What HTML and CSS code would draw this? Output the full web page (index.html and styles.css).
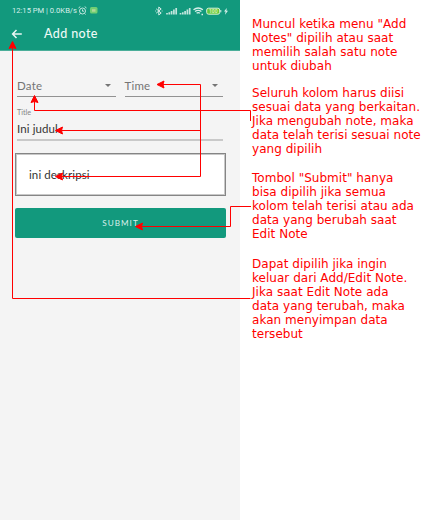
FILE: index.html
```html
<!DOCTYPE html>
<html lang="id">
<head>
<meta charset="utf-8">
<title>Add note</title>
<link rel="stylesheet" href="styles.css">
</head>
<body>
<main class="board">
  <section class="phone">
    <header class="appbar">
      <div class="status">
        <span class="clock">12:15 PM | 0.0KB/s</span>
        <svg class="alarm" width="9" height="9" viewBox="0 0 9 9"><circle cx="4.5" cy="5" r="3"/><path d="M.5 2 2.3.6M8.5 2 6.7.6M4.5 3.4V5.2H6M2.3 7.5 1.5 8.5M6.7 7.5 7.5 8.5"/></svg>
        <svg class="app" width="8" height="7" viewBox="0 0 8 7"><rect width="7.5" height="6.5" rx="1.5" fill="#72ce73"/><path d="M2 2.2h3.5v2.5H2z" fill="#b0d999"/></svg>
        <svg class="signals" width="74" height="10" viewBox="0 0 74 10">
          <path class="line" d="M1.2 2.8 6.2 7 3.8 9V1L6.2 3 1.2 7.2M.3 5h.8M6.7 5h.8"/>
          <path class="bars" d="M12 8.5V7M14.3 8.5V6.2M16.6 8.5V5M18.9 8.5V3.5M21.2 8.5V2"/>
          <path class="bars" d="M25.5 8.5V7M27.8 8.5V6.2M30.1 8.5V5M32.4 8.5V3.5M34.7 8.5V2"/>
          <path class="line wifi" d="M38.5 3.8Q43.2.2 47.9 3.8M40 5.6Q43.2 3.1 46.4 5.6M41.6 7.3Q43.2 6 44.8 7.3M46.5 8.5h1.5"/>
          <rect x="51.7" y="2.2" width="13" height="6" rx="1.8" fill="#62c83b" stroke="#d8f2d8"/>
          <path class="line" d="M65.8 4v2.3"/>
          <text x="58.2" y="7" class="level">100</text>
          <path d="M71.8 2 69 5.6h1.6L70 8.8l3-4h-1.6z" fill="#d7efea"/>
        </svg>
      </div>
      <div class="titlebar">
        <svg width="12" height="12" viewBox="0 0 12 12"><path d="M10.800 6H1.800M5.500 2 1.600 6 5.500 10"/></svg>
        <h1>Add note</h1>
      </div>
    </header>
    <form class="form">
      <div class="pickers">
        <div class="picker date"><span>Date</span><i class="caret"></i></div>
        <div class="picker"><span>Time</span><i class="caret"></i></div>
      </div>
      <div class="field">
        <label>Title</label>
        <div class="value">Ini judul</div>
      </div>
      <div class="description">ini deskripsi</div>
      <button class="submit" type="button">SUBMIT</button>
    </form>
  </section>
  <aside class="notes">
    <p>Muncul ketika menu "Add<br>Notes" dipilih atau saat<br>memilih salah satu note<br>untuk diubah</p>
    <p>Seluruh kolom harus diisi<br>sesuai data yang berkaitan.<br>Jika mengubah note, maka<br>data telah terisi sesuai note<br>yang dipilih</p>
    <p class="wide">Tombol "Submit" hanya<br>bisa dipilih jika semua<br>kolom telah terisi atau ada<br>data yang berubah saat<br>Edit Note</p>
    <p>Dapat dipilih jika ingin<br>keluar dari Add/Edit Note.<br>Jika saat Edit Note ada<br>data yang terubah, maka<br>akan menyimpan data<br>tersebut</p>
  </aside>
  <svg class="connectors" width="431" height="521" viewBox="0 0 431 521">
    <path class="wire" d="M12.5 47V298.5H250.5M34.5 101V110.5H250.5V121M163 84.5H200.5V176.5H61M200.5 130.5H61M141 226.5H230.5V206.5H251"/>
    <path class="heads" d="M12.5 41.500l3.500 7-3.500-1-3.500 1zM34.500 95.500l3.500 7-3.500-1-3.500 1zM157 84.500l7-3.500-1 3.500 1 3.500zM55.500 130.500l7-3.500-1 3.500 1 3.500zM55.500 176.500l7-3.500-1 3.500 1 3.500zM135.500 226.500l7-3.500-1 3.500 1 3.500z"/>
  </svg>
</main>
</body>
</html>
```
FILE: styles.css
```css
* { box-sizing: border-box; }
body { margin: 0; background: #fff; font-family: Lato, sans-serif; }
.board { position: relative; display: flex; width: 431px; height: 521px; overflow: hidden; }
.phone { width: 240px; height: 520px; background: #f4f4f4; }

.appbar { height: 51px; background: #12997d; color: #fff; border-bottom: 1px solid #4bae99; }
.status { display: flex; align-items: center; height: 21px; padding-left: 12px; }
.clock { width: 66px; font: 7.6px/10px Roboto, sans-serif; white-space: nowrap; color: #d7efea; }
.alarm { fill: none; stroke: #d7efea; stroke-width: .9; }
.app { margin-left: 3px; }
.signals { margin-left: 57px; }
.line { fill: none; stroke: #d7efea; stroke-width: 1; }
.wifi { stroke-width: 1.3; }
.bars { stroke: #c4e6de; stroke-width: 1.7; }
.level { font: 700 5px Roboto, sans-serif; text-anchor: middle; fill: #d5efb0; }
.titlebar { display: flex; align-items: center; gap: 21px; height: 26px; padding-left: 11px; }
.titlebar svg { fill: none; stroke: #e8f6f3; stroke-width: 1.5; }
h1 { margin: 0; font-size: 12.5px; line-height: 16px; font-weight: 500; letter-spacing: .4px; color: #eef9f6; }

.form { padding: 25px 15px 0; }
.pickers { display: flex; gap: 9px; padding: 0 2px; }
.picker { display: flex; justify-content: space-between; align-items: center; width: 99px; height: 21px; padding-bottom: 1px; border-bottom: 1px solid #929292; font-size: 11.5px; letter-spacing: .2px; color: #757575; }
.caret { margin-right: 5px; border: 3px solid transparent; border-top-color: #757575; border-bottom: 0; }
.field { height: 44px; margin: 0 2px; padding-top: 11px; border-bottom: 2px solid #c9c9c9; }
label { display: block; font-size: 7.2px; line-height: 9px; color: #858585; }
.value { margin-top: 5px; font-size: 11.5px; line-height: 14px; letter-spacing: .1px; color: #333; }
.description { height: 43px; margin: 12px -1px 0 0; padding: 13px 13px; border: 1px solid #858585; outline: 1px solid #c8c8c8; outline-offset: -2px; background: #fff; font-size: 11.5px; line-height: 15px; letter-spacing: .1px; color: #333; }
.submit { display: block; width: 211px; height: 30px; margin-top: 12px; padding: 0; border: 0; border-radius: 2px; background: #12997d; color: #d9efea; font: 8.2px/30px Lato, sans-serif; letter-spacing: 1px; }

.notes { padding: 17px 0 0 12px; font: 12px/14px "DejaVu Sans", sans-serif; letter-spacing: .03px; color: #f00; white-space: nowrap; }
.notes p { margin: 0 0 13px; }
.notes p + p { margin-bottom: 15px; }
.notes .wide { margin-bottom: 16px; }

.connectors { position: absolute; left: 0; top: 0; }
.wire { fill: none; stroke: #f00; stroke-width: 1; }
.heads { fill: #f00; stroke: #f00; stroke-width: 1; }
```
